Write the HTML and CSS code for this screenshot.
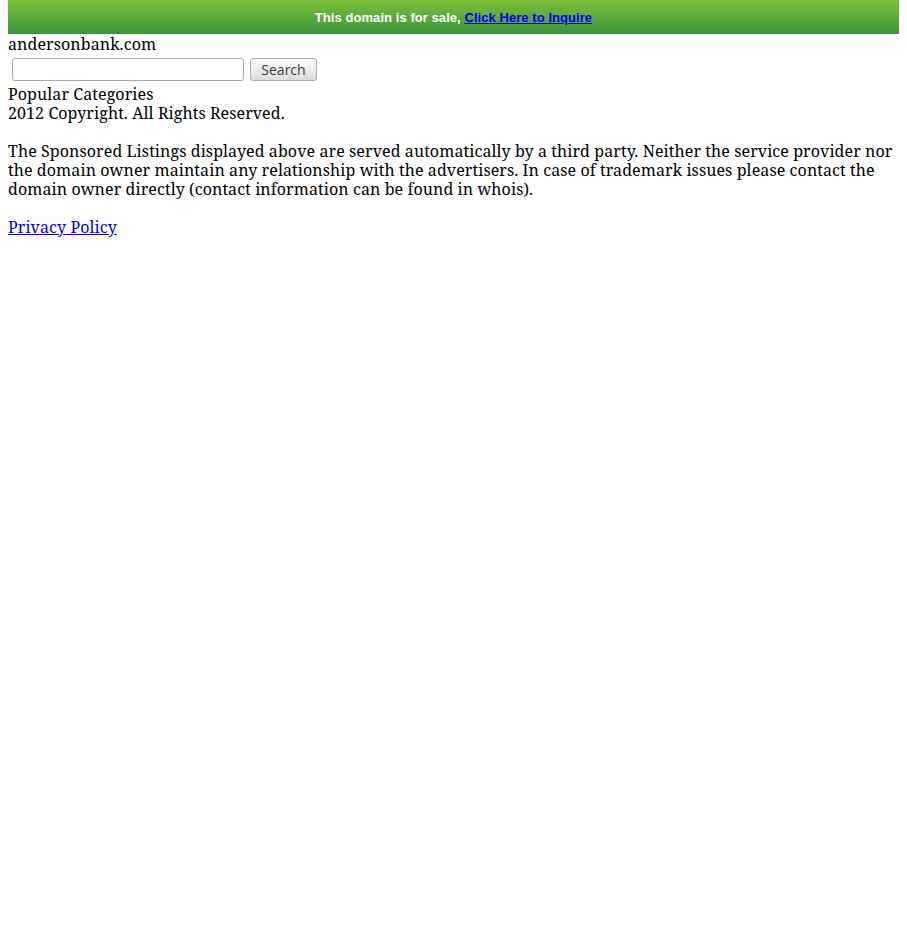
FILE: index.html
```html
<!DOCTYPE html>
<html>
<head>
<meta charset="utf-8">
<link rel="stylesheet" href="styles.css">
</head>
<body>
<div class="banner">This domain is for sale, <a href="#">Click Here to Inquire</a></div>
<div class="domain">andersonbank.com</div>
<form class="search">
<input type="text" class="search-input"><button type="button" class="search-btn">Search</button>
</form>
<div class="cats">Popular Categories</div>
<div class="copy">2012 Copyright. All Rights Reserved.</div>
<p class="disclaimer">The Sponsored Listings displayed above are served automatically by a third party. Neither the service provider nor the domain owner maintain any relationship with the advertisers. In case of trademark issues please contact the domain owner directly (contact information can be found in whois).</p>
<p class="privacy"><a href="#">Privacy Policy</a></p>
</body>
</html>
```
FILE: styles.css
```css
body {
  margin: 0 8px;
  font-family: "Noto Serif", "DejaVu Serif", serif;
  font-size: 16px;
  line-height: 19px;
  letter-spacing: 0.09px;
  color: #000;
}
.banner {
  height: 34px;
  line-height: 35px;
  text-align: center;
  background: linear-gradient(#7dc13a, #3c943b);
  color: #fff;
  font-family: "Liberation Sans", Arial, sans-serif;
  font-weight: bold;
  font-size: 13px;
  letter-spacing: 0.06px;
  margin-bottom: 1px;
}
.banner a { color: #0000ee; }
.search {
  margin: 0;
  padding: 4px;
  height: 23px;
  display: flex;
  align-items: center;
  gap: 6px;
  letter-spacing: 0;
}
.search-input {
  box-sizing: border-box;
  width: 232px;
  height: 23px;
  border: 1px solid #a9a9a9;
  border-radius: 3px;
  margin: 0;
  padding: 1px 4px;
}
.search-btn {
  box-sizing: border-box;
  width: 67px;
  height: 23px;
  padding: 0;
  border: 1px solid #adadad;
  border-radius: 3px;
  background: linear-gradient(#fafafa, #dcdcdc);
  font-family: "Open Sans", "Noto Sans", sans-serif;
  font-size: 14px;
  line-height: 21px;
  color: #3c3c3c;
  margin: 0;
}
.disclaimer { margin: 19px 0; }
.privacy { margin: 0; }
.privacy a { color: #0000ee; }
```
